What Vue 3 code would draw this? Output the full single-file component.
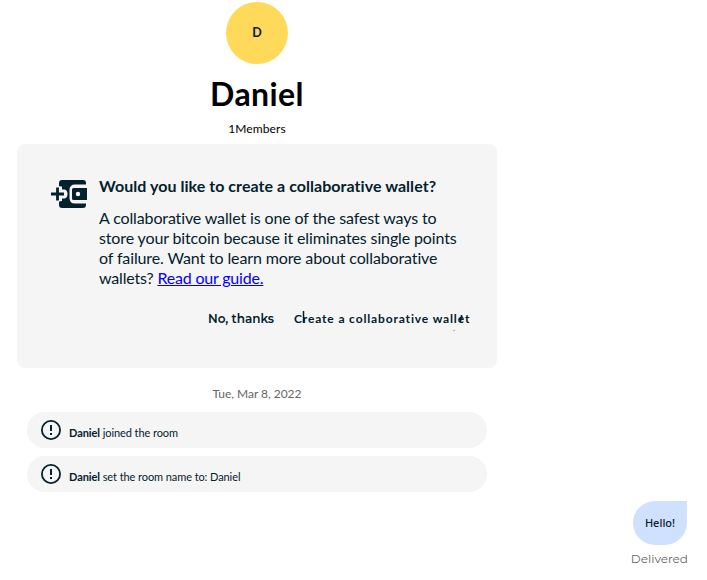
<script setup>
const intro = [
  'A collaborative wallet is one of the safest ways to',
  'store your bitcoin because it eliminates single points',
  'of failure. Want to learn more about collaborative',
]
const events = ['joined the room', 'set the room name to: Daniel']
</script>

<template>
  <main class="room">
    <section class="timeline">
      <div class="avatar">D</div>
      <h1><span>Daniel</span></h1>
      <div class="members"><span>1Members</span></div>
      <section class="card">
        <svg class="wallet" width="36" height="28" viewBox="0 0 36 28">
          <path fill="#03212d" d="M11 0H32Q35 0 35 3V4.500H24Q18.500 4.500 18.500 10V18Q18.500 23.500 24 23.500H35V25Q35 28 32 28H11Q8 28 8 25V21H11V18.500H13.500Q16.500 18 16.500 14Q16.500 10 13.500 9.500H11V6.500H8V3Q8 0 11 0Z" />
          <path fill="#f5f5f5" d="M5 6.500H9.500V11H14V17H9.500V21.500H5Z" />
          <path fill="#03212d" fill-rule="evenodd" d="M22.500 8H36V20H22.500Q21 20 21 18.500V9.500Q21 8 22.500 8ZM27 11.800A2.200 2.200 0 1 0 27 16.200A2.200 2.200 0 1 0 27 11.800Z" />
          <path fill="none" stroke="#03212d" stroke-width="2.800" d="M0 14H13M6.500 7.500V20.500" />
        </svg>
        <div class="copy">
          <h2><span>Would you like to create a collaborative wallet?</span></h2>
          <p>
            <span v-for="line in intro" :key="line" class="line">{{ line }}</span>
            <span class="line last">wallets? <a href="#">Read our guide.</a></span>
          </p>
          <div class="actions">
            <button class="decline">No, thanks</button>
            <button class="create">Create a collaborative wallet
              <svg class="marks" width="180" height="24" viewBox="0 0 180 24">
                <path fill="none" stroke="#03212d" stroke-width="1.500" d="M9.500 5V17M167.500 9L166.500 16M165.500 13L169 11" />
                <path fill="none" stroke="#aaa" d="M159 25L161 24" />
              </svg>
            </button>
          </div>
        </div>
      </section>
      <div class="date"><span>Tue, Mar 8, 2022</span></div>
      <div v-for="event in events" :key="event" class="event">
        <svg width="20" height="20" viewBox="0 0 20 20">
          <circle cx="10" cy="10" r="9.100" fill="none" stroke="#03212d" stroke-width="1.800" />
          <path fill="#03212d" d="M9 5H11V11H9ZM9 13H11V15H9Z" />
        </svg>
        <span class="message"><b>Daniel</b> {{ event }}</span>
      </div>
    </section>
    <section class="outgoing">
      <div class="bubble">Hello!</div>
      <div class="status">Delivered</div>
    </section>
  </main>
</template>

<style>
body { margin: 0; background: #fff; }
</style>

<style scoped>
* { box-sizing: border-box; }
.room { width: 707px; height: 580px; overflow: hidden; padding: 2px 19px 0 17px; font-family: Lato, sans-serif; color: #03212d; font-variant-ligatures: none; }
.timeline { width: 480px; display: flex; flex-direction: column; align-items: center; }
.avatar { width: 62px; height: 62px; border-radius: 50%; background: #ffd95a; display: flex; align-items: center; justify-content: center; font: 700 12.500px/18px Lato, sans-serif; }
h1 { margin: 11px 0 0; font-size: 32px; line-height: 38px; font-weight: 700; letter-spacing: 0.4px; color: #000; }
.members { margin-top: 8px; height: 15px; font-size: 12px; line-height: 15px; letter-spacing: 0.1px; color: #000; }
.card { margin-top: 8px; width: 480px; height: 224px; flex: none; border-radius: 8px; background: #f5f5f5; padding: 31px 27px 0 34px; display: flex; gap: 12px; }
.wallet { flex: none; margin-top: 5px; }
.copy { flex: 1; white-space: nowrap; }
h2 { margin: 0; font-size: 16px; line-height: 22px; font-weight: 700; letter-spacing: 0.05px; }
p { margin: 11px 0 0; font-size: 16px; line-height: 20px; letter-spacing: -0.13px; }
.line { display: block; }
.last { letter-spacing: -0.19px; }
a { color: #00f; text-decoration: underline; }
.actions { height: 24px; margin-top: 19px; display: flex; justify-content: flex-end; gap: 20px; }
button { position: relative; border: 0; background: none; padding: 0; font: 700 12px/24px Lato, sans-serif; color: inherit; white-space: nowrap; font-variant-ligatures: none; }
.decline { font-family: Montserrat, "Open Sans", sans-serif; font-weight: 600; width: 66px; text-align: left; }
.create { width: 176px; letter-spacing: 0.86px; text-align: left; }
.marks { position: absolute; left: 0; top: -1px; overflow: visible; }
.date { margin-top: 18px; height: 16px; font-size: 12px; line-height: 16px; letter-spacing: -0.03px; color: #666; }
.event { margin-top: 8px; width: 460px; height: 36px; border-radius: 18px; background: #f5f5f5; padding: 0 14px; display: flex; align-items: center; gap: 8px; font-size: 11px; letter-spacing: -0.08px; white-space: nowrap; }
.date + .event { margin-top: 10px; }
.message { padding-top: 5px; line-height: 14px; }
.outgoing { margin-top: 9px; display: flex; flex-direction: column; align-items: flex-end; }
.bubble { margin-right: 1px; width: 54px; height: 44px; border-radius: 22px 0 22px 22px; background: #d0e1ff; display: flex; align-items: center; justify-content: center; font: 500 11px/16px "Noto Sans", sans-serif; }
.status { margin-top: 5px; font: 400 12px/18px Montserrat, "Open Sans", sans-serif; color: #666; }
</style>
